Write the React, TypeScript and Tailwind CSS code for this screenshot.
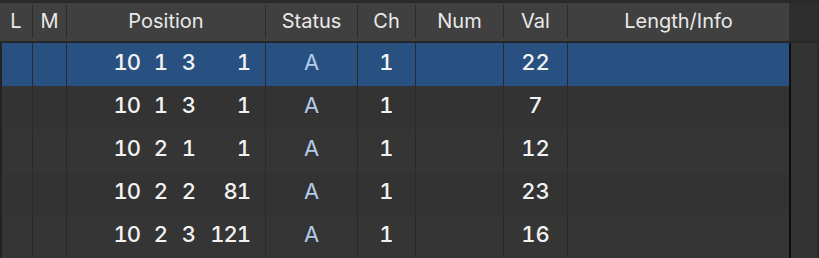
import React from 'react';

type Row = {
  pos: [string, string, string, string];
  status: string;
  ch: string;
  val: string;
};

const rows: Row[] = [
  { pos: ['10', '1', '3', '1'], status: 'A', ch: '1', val: '22' },
  { pos: ['10', '1', '3', '1'], status: 'A', ch: '1', val: '7' },
  { pos: ['10', '2', '1', '1'], status: 'A', ch: '1', val: '12' },
  { pos: ['10', '2', '2', '81'], status: 'A', ch: '1', val: '23' },
  { pos: ['10', '2', '3', '121'], status: 'A', ch: '1', val: '16' },
];

const cols = 'grid grid-cols-[33px_34px_199px_92px_58px_88px_64px_221px]';

const headers = ['L', 'M', 'Position', 'Status', 'Ch', 'Num', 'Val', 'Length/Info'];

function HeaderCell({ label, last }: { label: string; last?: boolean }) {
  return (
    <div className="flex items-center h-full">
      <span className="flex-1 text-center pb-[1px]">{label}</span>
      {!last && <span className="w-px h-[33px] bg-[#2b2b2b]" />}
    </div>
  );
}

export default function App() {
  return (
    <div
      className="w-[819px] h-[258px] overflow-hidden bg-[#2b2b2b] flex flex-col"
      style={{ fontFamily: 'Inter, "Liberation Sans", sans-serif' }}
    >
      <div className="h-[3px] bg-[#2a2a2a]" />

      {/* Header */}
      <div className="flex h-[39px]">
        <div className={`${cols} w-[789px] bg-[#404040] text-[#e9e9e9] text-[20px]`}>
          {headers.map((h, i) => (
            <HeaderCell key={h} label={h} last={i === headers.length - 1} />
          ))}
        </div>
        <div className="w-[30px] bg-[#2e2e2e]" />
      </div>
      <div className="h-[2px] bg-[#262626]" />

      {/* Rows */}
      <div className="flex flex-1">
        <div className="w-[789px]">
          {rows.map((r, i) => (
            <div
              key={i}
              className={`${cols} h-[43px] text-[22px] font-medium tabular-nums text-[#f2f2f2] ${
                i === 0 ? 'bg-[#285081]' : i % 2 === 1 ? 'bg-[#333333]' : 'bg-[#353535]'
              }`}
            >
              <div className="border-l-2 border-[#222222] border-r border-r-[#2a2a2a]" />
              <div className="border-r border-[#2a2a2a]" />
              <div className="border-r border-[#2a2a2a] flex items-center justify-end pr-[15px] pb-[4px] tracking-[-1px]">
                <span className="w-[30px] text-right">{r.pos[0]}</span>
                <span className="w-[27px] text-right">{r.pos[1]}</span>
                <span className="w-[28px] text-right">{r.pos[2]}</span>
                <span className="w-[55px] text-right">{r.pos[3]}</span>
              </div>
              <div className="border-r border-[#2a2a2a] flex items-center justify-center pb-[4px] font-normal text-[#b3cbea]">
                {r.status}
              </div>
              <div className="border-r border-[#2a2a2a] flex items-center justify-center pb-[4px]">{r.ch}</div>
              <div className="border-r border-[#2a2a2a]" />
              <div className="border-r border-[#2a2a2a] flex items-center justify-center pb-[4px]">{r.val}</div>
              <div />
            </div>
          ))}
        </div>
        <div className="w-[30px] border-l-2 border-[#0d0d0d] bg-[#333333] border-r-2 border-r-[#2a2a2a]" />
      </div>
    </div>
  );
}
